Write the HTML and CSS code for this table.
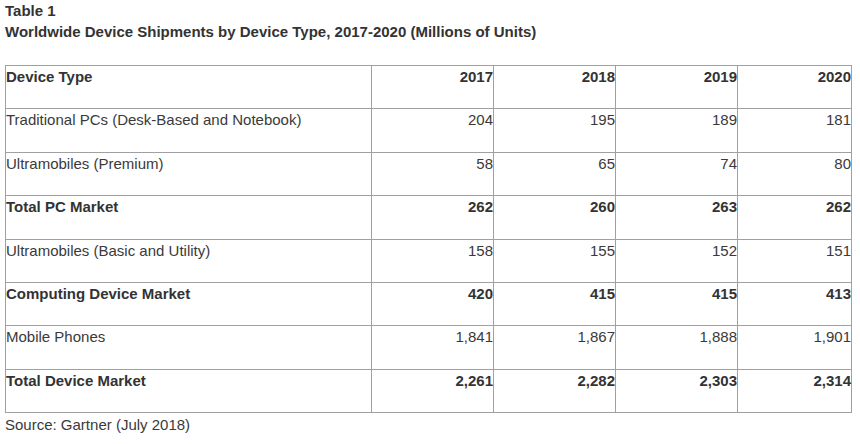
FILE: index.html
```html
<!DOCTYPE html>
<html lang="en">
<head>
<meta charset="utf-8">
<title>Table 1</title>
<link rel="stylesheet" href="styles.css">
</head>
<body>
<div class="page">
  <h1 class="caption">Table 1<br>Worldwide Device Shipments by Device Type, 2017-2020 (Millions of Units)</h1>
  <table class="data">
    <colgroup>
      <col class="c-type"><col class="c-num"><col class="c-num"><col class="c-num"><col class="c-last">
    </colgroup>
    <tr class="bold"><td>Device Type</td><td class="n">2017</td><td class="n">2018</td><td class="n">2019</td><td class="n">2020</td></tr>
    <tr><td>Traditional PCs (Desk-Based and Notebook)</td><td class="n">204</td><td class="n">195</td><td class="n">189</td><td class="n">181</td></tr>
    <tr><td>Ultramobiles (Premium)</td><td class="n">58</td><td class="n">65</td><td class="n">74</td><td class="n">80</td></tr>
    <tr class="bold"><td>Total PC Market</td><td class="n">262</td><td class="n">260</td><td class="n">263</td><td class="n">262</td></tr>
    <tr><td>Ultramobiles (Basic and Utility)</td><td class="n">158</td><td class="n">155</td><td class="n">152</td><td class="n">151</td></tr>
    <tr class="bold"><td>Computing Device Market</td><td class="n">420</td><td class="n">415</td><td class="n">415</td><td class="n">413</td></tr>
    <tr><td>Mobile Phones</td><td class="n">1,841</td><td class="n">1,867</td><td class="n">1,888</td><td class="n">1,901</td></tr>
    <tr class="bold"><td>Total Device Market</td><td class="n">2,261</td><td class="n">2,282</td><td class="n">2,303</td><td class="n">2,314</td></tr>
  </table>
  <p class="source">Source: Gartner (July 2018)</p>
</div>
</body>
</html>
```
FILE: styles.css
```css
html, body {
  margin: 0;
  padding: 0;
  background: #ffffff;
}
.page {
  padding: 0 5px;
  font-family: "Liberation Sans", Arial, sans-serif;
  color: #333333;
}
.caption {
  margin: 0;
  font-size: 15px;
  line-height: 21px;
  font-weight: bold;
  color: #333333;
}
.data {
  margin-top: 23px;
  width: 846px;
  border-collapse: collapse;
  table-layout: fixed;
  border: 1px solid #808080;
  font-size: 15px;
  line-height: 17px;
}
.c-type { width: 366px; }
.c-num { width: 122px; }
.c-last { width: 114px; }
.data td {
  border: 1px solid #a0a0a0;
  padding: 2px 0 0 0;
  height: 40.4px;
  vertical-align: top;
  color: #3a3a3a;
}
.data td.n {
  text-align: right;
}
.data tr.bold td {
  font-weight: bold;
  color: #333333;
}
.source {
  margin: 3px 0 0 0;
  font-size: 15px;
  line-height: 17px;
  color: #3a3a3a;
}
```
